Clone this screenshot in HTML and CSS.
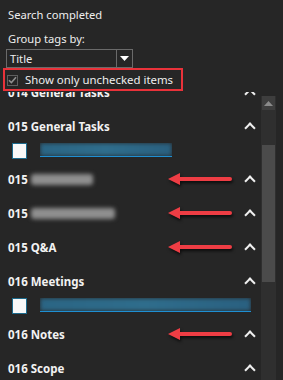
FILE: index.html
```html
<!DOCTYPE html>
<html>
<head>
<meta charset="utf-8">
<link rel="stylesheet" href="styles.css">
</head>
<body>
<div class="panel">
  <div class="status">Search completed</div>
  <div class="label">Group tags by:</div>
  <div class="select">
    <span class="select-value">Title</span>
    <span class="select-btn"><svg width="9" height="5" viewBox="0 0 9 5"><path d="M0 0H9L4.5 5Z" fill="#fff"/></svg></span>
  </div>
  <div class="check-row">
    <span class="cb"><svg width="9" height="8" viewBox="0 0 9 8"><path d="M1 4.2L3.4 6.6L8 1.2" fill="none" stroke="#8f8f8f" stroke-width="1.6"/></svg></span>
    <span class="check-label">Show only unchecked items</span>
  </div>
  <div class="results">
    <div class="list">
      <div class="list-inner">
        <div class="group"><span class="g-title">014 General Tasks</span><span class="chev"></span></div>
        <div class="group"><span class="g-title">015 General Tasks</span><span class="chev"></span></div>
        <div class="item"><span class="item-cb"></span><span class="link short"><span class="link-blur"></span></span></div>
        <div class="group"><span class="g-title">015 <span class="blur b1"></span></span><span class="chev"></span><span class="arrow"></span></div>
        <div class="group"><span class="g-title">015 <span class="blur b2"></span></span><span class="chev"></span><span class="arrow"></span></div>
        <div class="group"><span class="g-title">015 Q&amp;A</span><span class="chev"></span><span class="arrow"></span></div>
        <div class="group"><span class="g-title">016 Meetings</span><span class="chev"></span></div>
        <div class="item"><span class="item-cb"></span><span class="link long"><span class="link-blur"></span></span></div>
        <div class="group"><span class="g-title">016 Notes</span><span class="chev"></span><span class="arrow"></span></div>
        <div class="group"><span class="g-title">016 Scope</span><span class="chev"></span></div>
      </div>
    </div>
    <div class="scrollbar">
      <div class="sb-btn"><svg width="9" height="5" viewBox="0 0 9 5"><path d="M0 5H9L4.5 0Z" fill="#8a8a8a"/></svg></div>
      <div class="sb-track"><div class="sb-thumb"></div></div>
    </div>
  </div>
</div>
</body>
</html>
```
FILE: styles.css
```css
html, body {
  margin: 0;
  padding: 0;
  background: #262626;
  height: 100%;
  overflow: hidden;
}
.panel {
  font-family: "Noto Sans", "Open Sans", sans-serif;
  font-size: 11.2px;
  color: #eeeeee;
  height: 380px;
  display: flex;
  flex-direction: column;
  padding-top: 7px;
  box-sizing: border-box;
}
.status {
  line-height: 16px;
  padding-left: 8px;
}
.label {
  line-height: 16px;
  padding-left: 8px;
  margin-top: 8px;
}
.select {
  margin: 2px 0 0 6px;
  width: 127px;
  height: 19px;
  border: 1px solid #6a6a6a;
  box-sizing: border-box;
  display: flex;
  align-items: center;
  background: #262626;
}
.select-value {
  flex: 1;
  padding-left: 3px;
  line-height: 17px;
}
.select-btn {
  width: 15px;
  height: 17px;
  border-left: 1px solid #6a6a6a;
  display: flex;
  align-items: center;
  justify-content: center;
}
.check-row {
  margin-left: 3px;
  width: 180px;
  height: 23px;
  box-sizing: border-box;
  border: 2px solid #e9323a;
  display: flex;
  align-items: center;
  padding-left: 2px;
  padding-top: 1px;
}
.cb {
  width: 11px;
  height: 11px;
  border: 1px solid #5f5f5f;
  box-sizing: border-box;
  display: flex;
  align-items: center;
  justify-content: center;
}
.check-label {
  margin-left: 7px;
  line-height: 16px;
  font-size: 11.4px;
}
.results {
  flex: 1;
  display: flex;
  min-height: 0;
  margin-top: 1px;
}
.list {
  flex: 1;
  overflow: hidden;
  position: relative;
}
.list-inner {
  margin-top: -17px;
}
.group {
  height: 34px;
  display: flex;
  align-items: center;
  justify-content: space-between;
  padding: 0 6px 0 8px;
  position: relative;
  font-weight: 700;
  font-size: 11.5px;
  color: #f2f2f2;
}
.g-title {
  display: flex;
  align-items: center;
  white-space: pre;
}
.blur {
  display: inline-block;
  height: 11px;
  background: #8f8f8f;
  filter: blur(2px);
  border-radius: 3px;
}
.b1 { width: 62px; }
.b2 { width: 84px; }
.chev {
  width: 6px;
  height: 6px;
  border-left: 2px solid #f0f0f0;
  border-top: 2px solid #f0f0f0;
  transform: rotate(45deg);
  margin-top: 4px;
  margin-right: 1px;
}
.arrow {
  position: absolute;
  left: 168px;
  top: 11px;
  width: 64px;
  height: 12px;
  filter: drop-shadow(1px 2px 1.5px rgba(0,0,0,0.7));
}
.arrow::before {
  content: "";
  position: absolute;
  left: 0;
  top: 0;
  border-right: 12px solid #ee3d44;
  border-top: 6px solid transparent;
  border-bottom: 6px solid transparent;
}
.arrow::after {
  content: "";
  position: absolute;
  left: 10px;
  top: 4px;
  width: 54px;
  height: 4px;
  border-radius: 2px;
  background: #ee3d44;
}
.item {
  height: 19px;
  display: flex;
  align-items: flex-start;
  padding-left: 12px;
}
.item-cb {
  width: 15px;
  height: 16px;
  background: #f8f8f8;
  border: 1px solid #1c6a8c;
  box-sizing: border-box;
}
.link {
  margin-left: 13px;
  margin-top: 0;
  height: 13px;
  border-bottom: 1px solid #1e8fd3;
  display: block;
  overflow: hidden;
}
.link.short { width: 132px; }
.link.long { width: 211px; }
.link-blur {
  display: block;
  height: 13px;
  background: linear-gradient(90deg, #2b6584, #2f6d8c 50%, #2a6080);
  filter: blur(2px);
}
.scrollbar {
  width: 15px;
  margin: 4px 7px 0 0;
  background: #2f2f2f;
  display: flex;
  flex-direction: column;
  padding: 0 1px;
  box-sizing: border-box;
}
.sb-btn {
  height: 14px;
  background: #3e3e3e;
  display: flex;
  align-items: center;
  justify-content: center;
}
.sb-track {
  flex: 1;
  padding-top: 35px;
}
.sb-thumb {
  height: 137px;
  background: #4b4b4b;
}
```
